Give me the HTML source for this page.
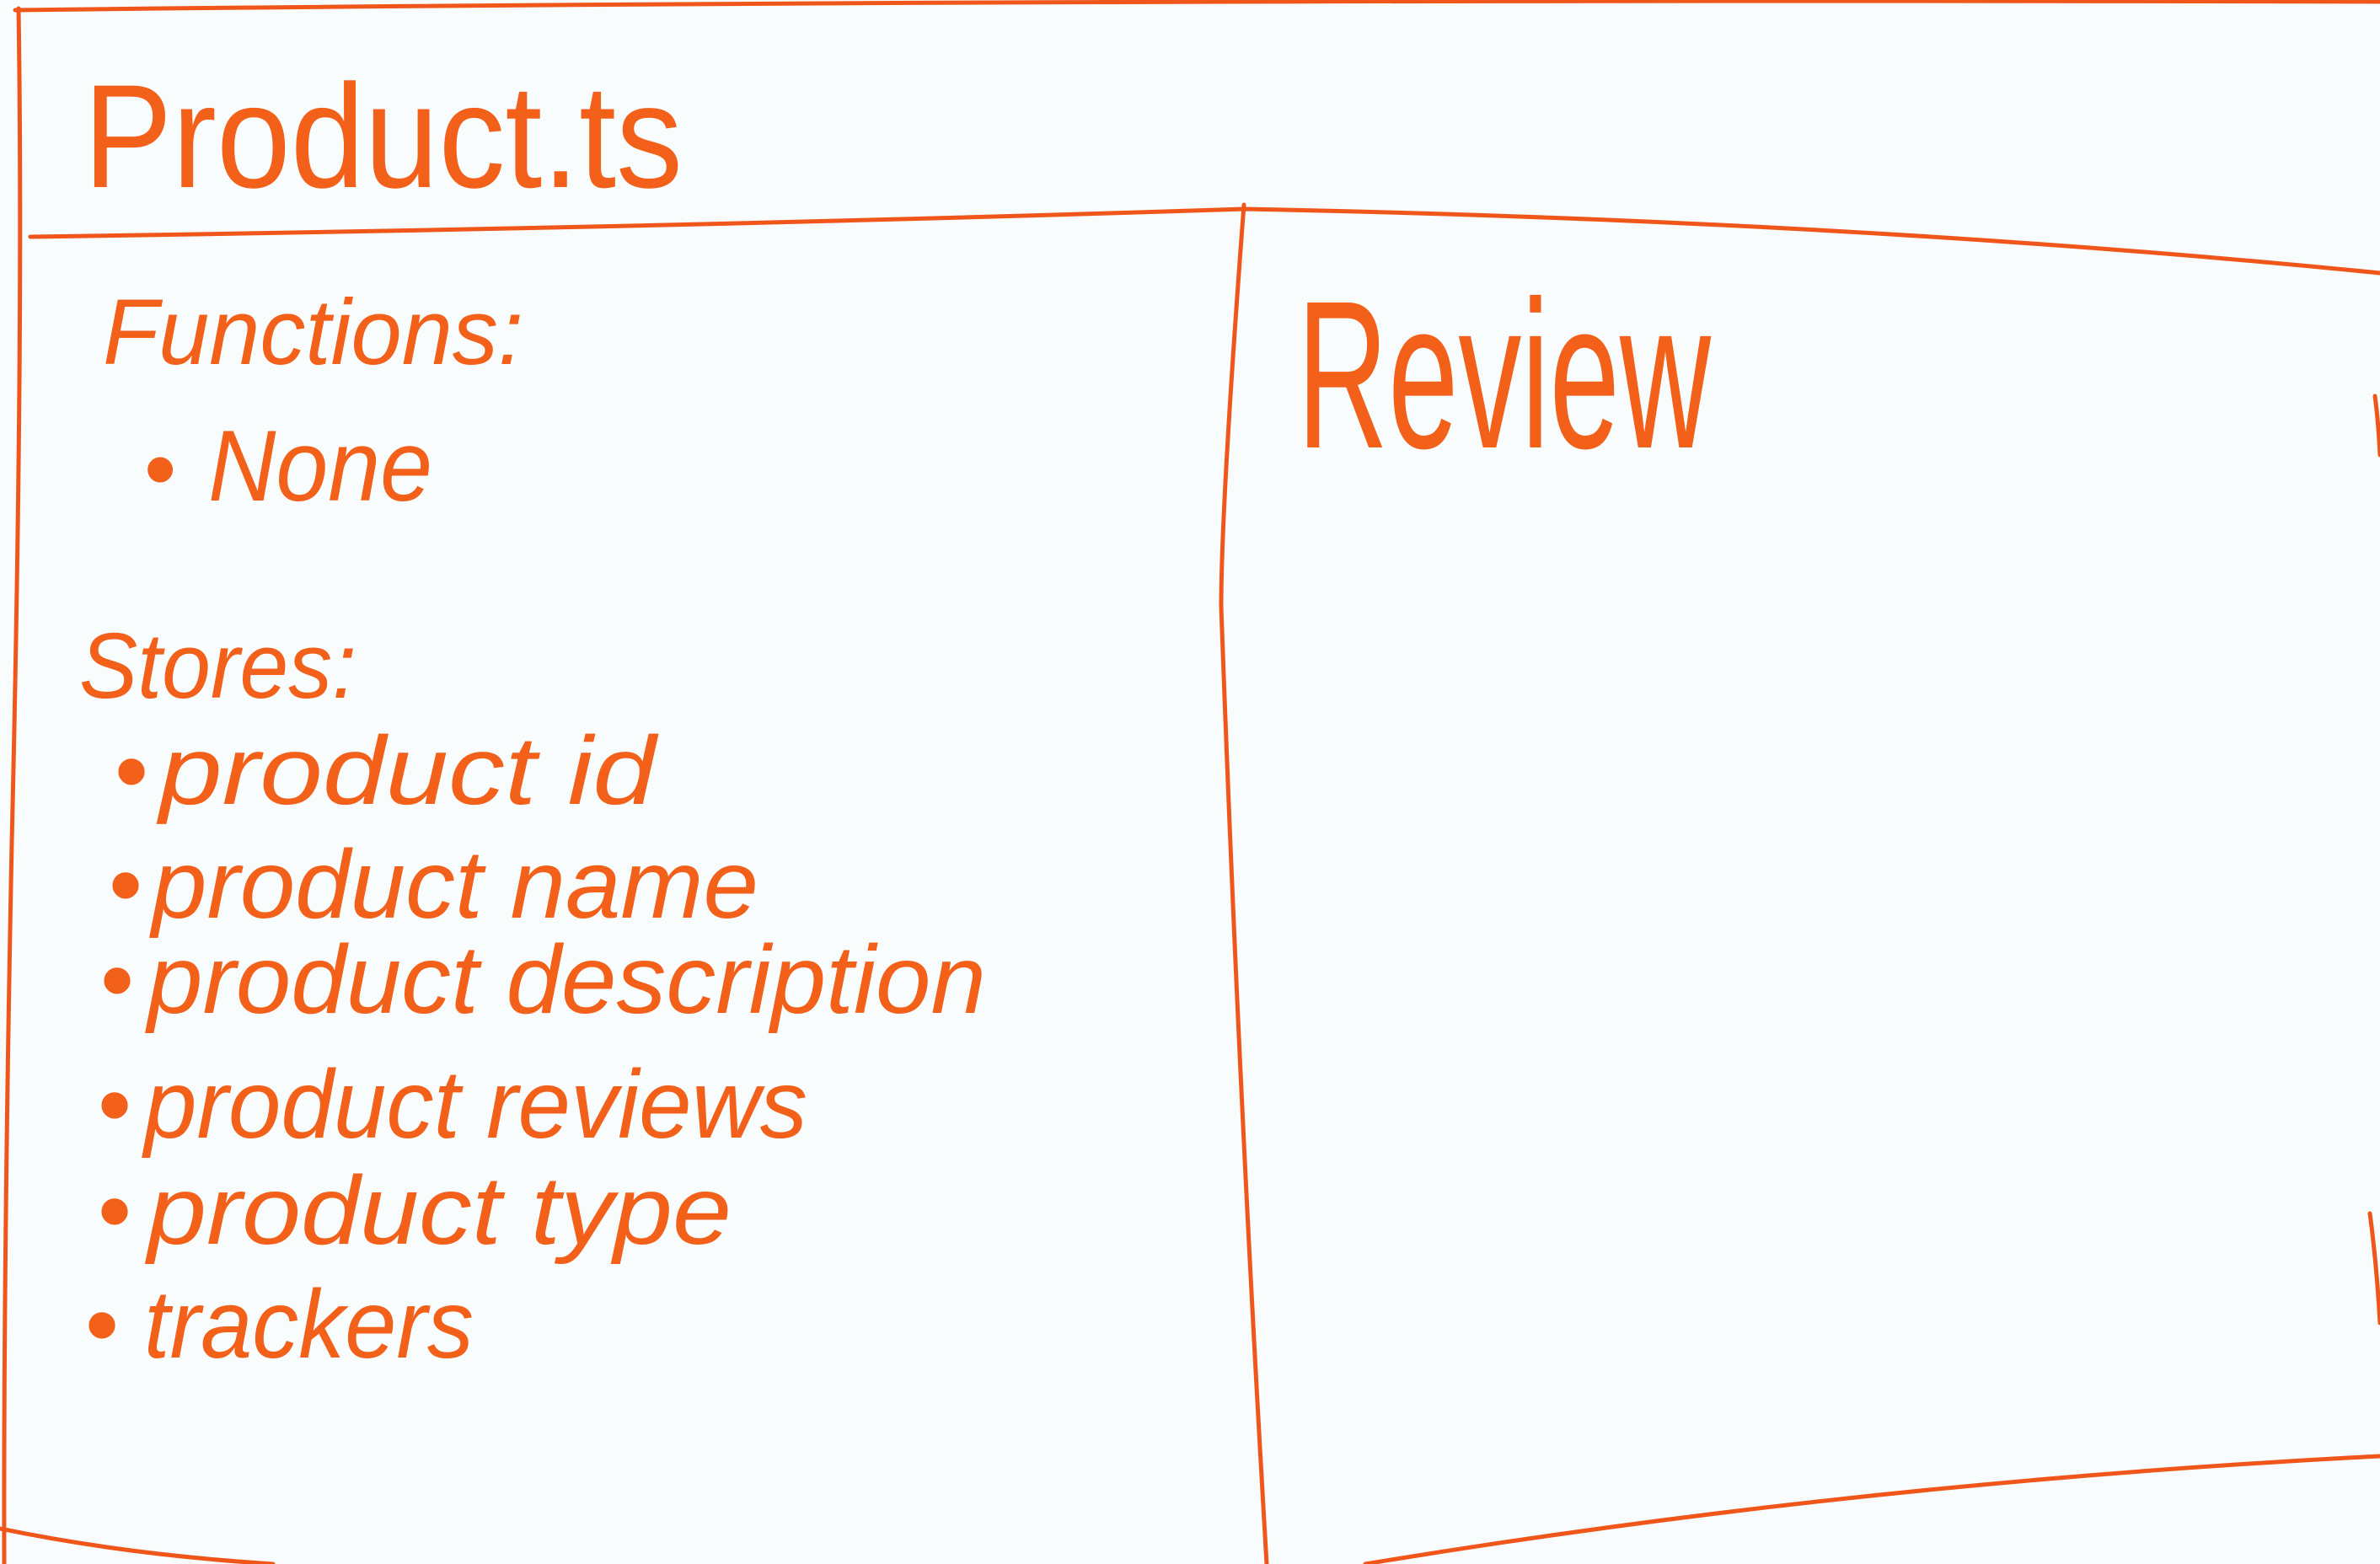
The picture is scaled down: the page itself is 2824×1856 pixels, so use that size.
<!DOCTYPE html>
<html><head><meta charset="utf-8"><style>
html,body{margin:0;padding:0;background:#f9fcfd;}
svg{display:block}
text{font-family:"Liberation Sans",sans-serif;fill:#f2601a;font-style:italic}
</style></head><body>
<svg width="2824" height="1856" viewBox="0 0 2824 1856" xmlns="http://www.w3.org/2000/svg">
<rect width="2824" height="1856" fill="#f9fcfd"/>
<g fill="none" stroke="#f0561a" stroke-width="5" stroke-linecap="round">
<path d="M18 12 Q1200 -2 2824 2"/>
<path d="M22 10 Q28 400 14 1000 Q4 1500 5 1856"/>
<path d="M36 281 Q800 270 1476 248 Q2200 262 2824 324"/>
<path d="M1476 243 Q1449 600 1449 720 Q1470 1300 1503 1856"/>
<path d="M0 1814 Q150 1845 324 1856"/>
<path d="M1620 1856 Q2200 1760 2824 1728"/>
<path d="M2818 470 Q2822 500 2824 540"/>
<path d="M2812 1440 Q2820 1500 2824 1570"/>
</g>
<text x="99" y="222" font-size="175" textLength="711" lengthAdjust="spacingAndGlyphs" style="font-style:normal">Product.ts</text>
<text x="122" y="432" font-size="110" textLength="499" lengthAdjust="spacingAndGlyphs">Functions:</text>
<text x="170" y="594" font-size="110">•</text>
<text x="247" y="594" font-size="120" textLength="266" lengthAdjust="spacingAndGlyphs">None</text>
<text x="94" y="828" font-size="110" textLength="329" lengthAdjust="spacingAndGlyphs">Stores:</text>
<g font-size="115">
<text x="135" y="954">•</text><text x="189" y="954" textLength="589" lengthAdjust="spacingAndGlyphs">product id</text>
<text x="128" y="1089">•</text><text x="180" y="1089" textLength="720" lengthAdjust="spacingAndGlyphs">product name</text>
<text x="118" y="1202">•</text><text x="175" y="1202" textLength="995" lengthAdjust="spacingAndGlyphs">product description</text>
<text x="115" y="1350">•</text><text x="171" y="1350" textLength="787" lengthAdjust="spacingAndGlyphs">product reviews</text>
<text x="115" y="1476">•</text><text x="175" y="1476" textLength="693" lengthAdjust="spacingAndGlyphs">product type</text>
<text x="100" y="1611">•</text><text x="171" y="1611" textLength="391" lengthAdjust="spacingAndGlyphs">trackers</text>
</g>
<text x="1539" y="531" font-size="250" textLength="491" lengthAdjust="spacingAndGlyphs" style="font-style:normal">Review</text>
</svg>
</body></html>
